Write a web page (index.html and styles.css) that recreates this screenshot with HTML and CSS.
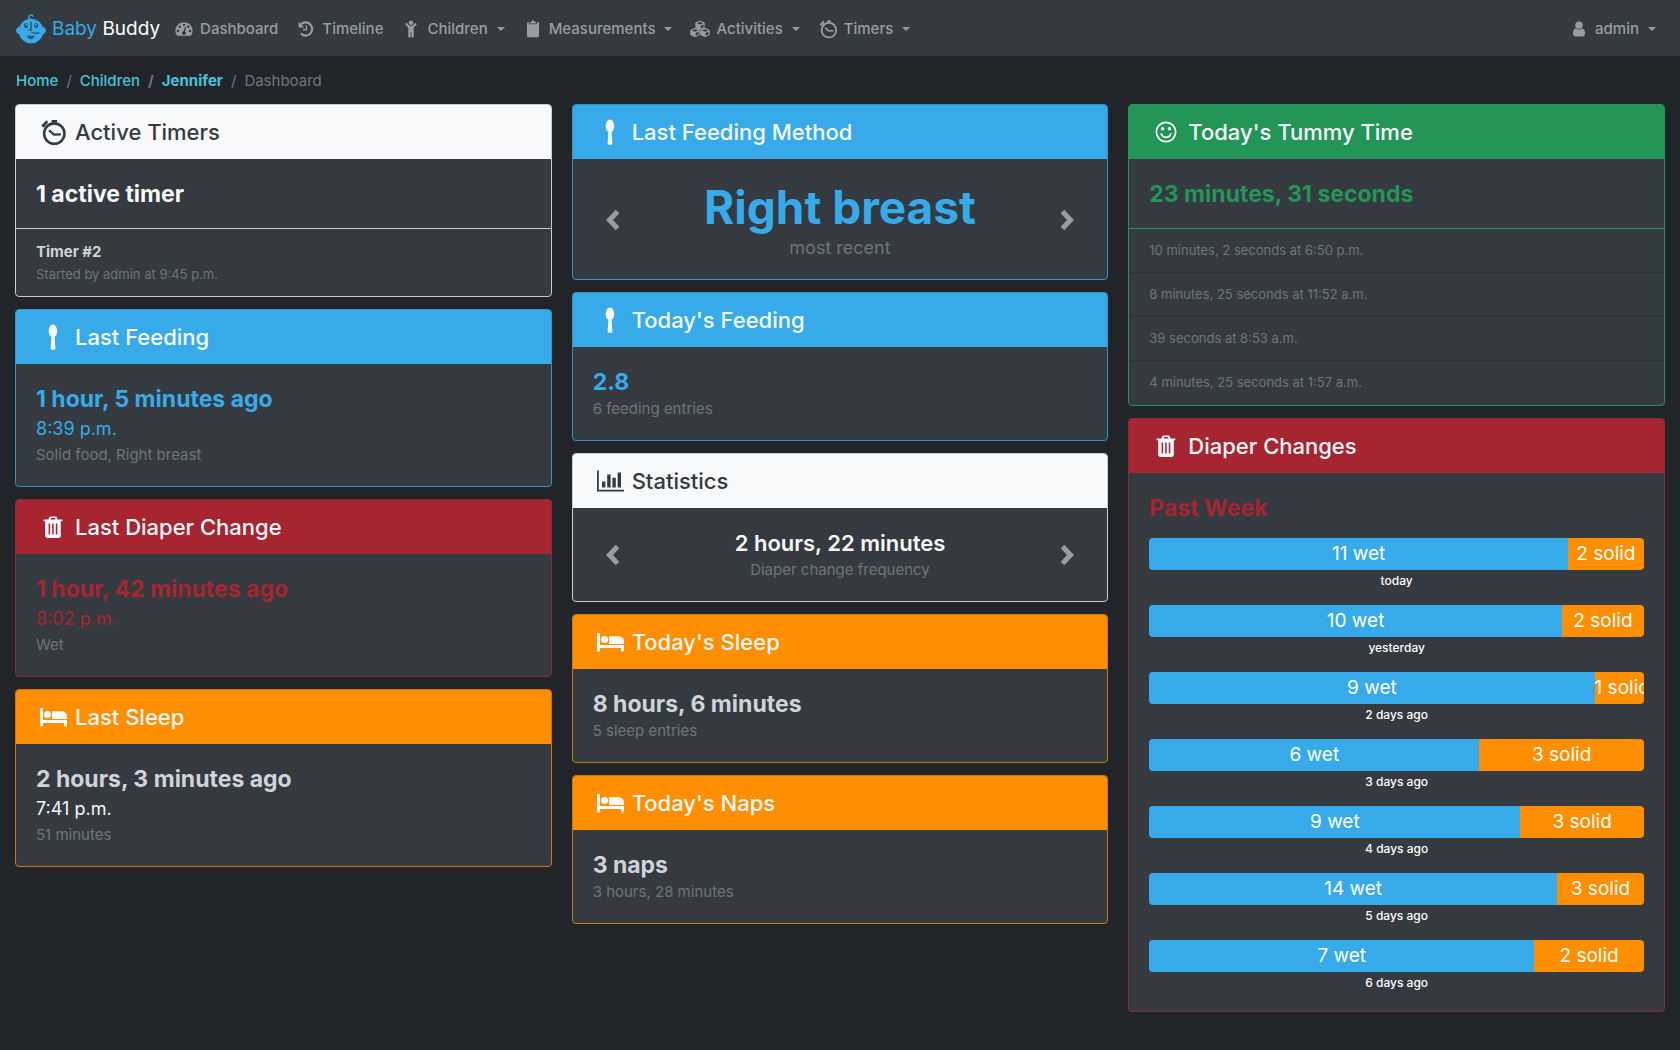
FILE: index.html
```html
<!DOCTYPE html>
<html lang="en">
<head>
<meta charset="utf-8">
<meta name="viewport" content="width=device-width, initial-scale=1">
<title>Baby Buddy</title>
<link rel="stylesheet" href="styles.css">
</head>
<body>
<svg class="sprite" aria-hidden="true">
  <symbol id="i-clock" viewBox="0 0 28 28">
    <circle cx="15.300" cy="15.600" r="10.200" fill="none" stroke="currentColor" stroke-width="2.600"/>
    <path d="M10.600 12.800L15 16.600L21 16.400" fill="none" stroke="currentColor" stroke-width="2.200" stroke-linecap="round"/>
    <path d="M12.600 2h5.400v2.600h-5.400zM2.200 7.600L7.600 2.200L9 3.800L8.400 5.800L6.400 7.600L5.600 9L4.400 9.400z" fill="currentColor"/>
  </symbol>
  <symbol id="i-spoon" viewBox="0 0 28 28">
    <path d="M14 1.600c2.600 0 4.300 3.500 4.300 7 0 2.700-1.100 4.400-2.700 5.200l.8 11.400c.1 1-.8 1.600-2.400 1.600s-2.500-.6-2.400-1.600l.8-11.400c-1.600-.8-2.700-2.500-2.700-5.200 0-3.500 1.700-7 4.300-7z" fill="currentColor"/>
  </symbol>
  <symbol id="i-trash" viewBox="0 0 28 28">
    <path fill="currentColor" fill-rule="evenodd" d="M4.600 6.400h4.800l.9-2.200c.2-.5.700-.8 1.200-.8h5c.5 0 1 .3 1.200.8l.9 2.200h4.800v1.900h-1.600v14.200c0 1.400-1 2.400-2.300 2.400h-11c-1.300 0-2.300-1-2.300-2.400V8.300H4.600zM11.500 6.400h5l-.6-1.300h-3.800zM9.600 10.600v10.800h1.500V10.600zM13.200 10.600v10.800h1.500V10.600zM16.800 10.600v10.800h1.500V10.600z"/>
  </symbol>
  <symbol id="i-bed" viewBox="0 0 28 28">
    <path fill="currentColor" d="M1 5h3v12h24v6.600h-3V20H4v3.600H1z"/>
    <circle cx="8.500" cy="11.500" r="3.600" fill="currentColor"/>
    <path fill="currentColor" d="M13 8.200h9.500c3.300 0 5.500 2.300 5.500 5.500v2.300H13z"/>
  </symbol>
  <symbol id="i-chart" viewBox="0 0 28 28">
    <path fill="currentColor" d="M1 3.500h1.800v19.200H28v1.800H1zM6 14.500h3.400v6H6zM11.200 7.500h3.400v13h-3.400zM16.400 10.800h3.400v9.700h-3.400zM21.600 5.500H25v15h-3.400z"/>
  </symbol>
  <symbol id="i-smile" viewBox="0 0 28 28">
    <circle cx="14" cy="14" r="9.600" fill="none" stroke="currentColor" stroke-width="1.800"/>
    <circle cx="10.600" cy="10.800" r="1.700" fill="currentColor"/>
    <circle cx="17.400" cy="10.800" r="1.700" fill="currentColor"/>
    <path d="M9.200 16c1 2.400 2.700 3.400 4.800 3.400s3.800-1 4.800-3.400" fill="none" stroke="currentColor" stroke-width="1.700" stroke-linecap="round"/>
  </symbol>
  <symbol id="i-gauge" viewBox="0 0 28 28">
    <path fill="currentColor" fill-rule="evenodd" d="M14 4.500c6.900 0 12 5.400 12 12 0 2.300-.6 4.500-1.800 6.400-.3.400-.7.600-1.200.6H5c-.5 0-.9-.2-1.200-.6C2.600 21 2 18.800 2 16.500c0-6.600 5.100-12 12-12zM5.500 15a1.700 1.700 0 1 0 0 3.400 1.700 1.700 0 0 0 0-3.400zM8.100 9a1.700 1.700 0 1 0 0 3.400 1.700 1.700 0 0 0 0-3.400zM14 6.500a1.700 1.700 0 1 0 0 3.400 1.700 1.700 0 0 0 0-3.400zM19.900 9a1.700 1.700 0 1 0 0 3.400 1.700 1.700 0 0 0 0-3.400zM22.500 15a1.700 1.700 0 1 0 0 3.400 1.700 1.700 0 0 0 0-3.400zM15.200 11.200L13.600 17a2.600 2.600 0 1 0 1.800.5l1.500-5.800z"/>
  </symbol>
  <symbol id="i-history" viewBox="0 0 28 28">
    <path d="M7 7.400A9.200 9.200 0 1 1 6.800 20.400" fill="none" stroke="currentColor" stroke-width="3"/>
    <path d="M3.600 4v8h8z" fill="currentColor"/>
    <path d="M14.600 9v6h-4.600" fill="none" stroke="currentColor" stroke-width="2"/>
  </symbol>
  <symbol id="i-child" viewBox="0 0 28 28">
    <circle cx="14" cy="5.200" r="3.200" fill="currentColor"/>
    <path fill="currentColor" d="M6.600 6.200c.6-.6 1.500-.6 2.100 0l3.300 3.300h4l3.300-3.300c.6-.6 1.500-.6 2.100 0s.6 1.500 0 2.100L17.800 12v12.600c0 .9-.7 1.600-1.600 1.600s-1.600-.7-1.600-1.600V19h-1.200v5.600c0 .9-.7 1.600-1.600 1.600s-1.600-.7-1.600-1.600V12L6.600 8.300c-.6-.6-.6-1.500 0-2.100z"/>
  </symbol>
  <symbol id="i-clipboard" viewBox="0 0 28 28">
    <path fill="currentColor" d="M5.600 6.500c0-1 .8-1.800 1.800-1.800H8.500v2.600h11V4.700h1.100c1 0 1.800.8 1.800 1.800v17.200c0 1-.8 1.800-1.800 1.800H7.400c-1 0-1.800-.8-1.800-1.800z"/>
    <path fill="currentColor" d="M9.700 6.200V4.600c1-.5 1.900-.6 2.500-1 .3-1.200.8-2 1.800-2s1.500.8 1.800 2c.6.400 1.500.5 2.500 1v1.600z"/>
  </symbol>
  <symbol id="i-cubes" viewBox="0 0 30 28">
    <g fill="currentColor" stroke="currentColor" stroke-width="1.400" stroke-linejoin="round">
      <path d="M15 2l6.300 2.800v7L15 14.600l-6.300-2.800v-7z"/>
      <path d="M7.500 13l6.300 2.800v7l-6.300 2.800-6.300-2.800v-7z"/>
      <path d="M22.500 13l6.300 2.800v7l-6.300 2.800-6.300-2.800v-7z"/>
    </g>
    <path class="cube-face" d="M15 3.200l4.600 2L15 7.200l-4.600-2zM7.500 14.200l4.600 2-4.600 2-4.600-2zM22.500 14.200l4.600 2-4.600 2-4.600-2zM16 9.100l4.200-1.900v4L16 13zM8.500 20.100l4.200-1.900v4L8.500 24zM23.500 20.100l4.200-1.900v4L23.500 24z"/>
  </symbol>
  <symbol id="i-user" viewBox="0 0 28 28">
    <circle cx="14" cy="8.600" r="5.200" fill="currentColor"/>
    <path fill="currentColor" d="M9.600 12.800c1.200 1.300 2.700 2 4.400 2s3.200-.7 4.400-2c2.700.6 4 3.600 4 7.200 0 2.700-1.300 4.500-3.400 4.500H9c-2.100 0-3.400-1.800-3.400-4.500 0-3.600 1.300-6.600 4-7.200z"/>
  </symbol>
  <symbol id="i-prev" viewBox="0 0 16 24">
    <path d="M12.500 3.500L4.500 12l8 8.500" fill="none" stroke="currentColor" stroke-width="5"/>
  </symbol>
  <symbol id="i-next" viewBox="0 0 16 24">
    <path d="M3.500 3.500l8 8.500-8 8.500" fill="none" stroke="currentColor" stroke-width="5"/>
  </symbol>
</svg>

<nav class="navbar">
  <a class="brand" href="#">
    <svg class="logo" viewBox="0 0 30 30" aria-hidden="true">
      <circle cx="15" cy="17" r="12.300" fill="#37abe9"/>
      <path d="M3.500 12.500C1.200 13 0 15 0 16.700s1.800 3.600 4 3.800zM26.500 12.500c2.300.5 3.500 2.500 3.500 4.200s-1.800 3.600-4 3.800z" fill="#37abe9"/>
      <path d="M17.300 2.700a2.300 2.300 0 1 0-1.200 2.600" fill="none" stroke="#37abe9" stroke-width="1.300"/>
      <g fill="none" stroke="#2b4d66" stroke-width="1.300" stroke-linecap="round">
        <path d="M15 8.200v7.600h-2"/>
        <path d="M15.600 18c2.200 1.400 4.800 1.600 7.200 1"/>
      </g>
      <ellipse cx="10" cy="11.500" rx="2" ry="2.600" fill="#2b4d66"/>
      <ellipse cx="20.200" cy="11.500" rx="2" ry="2.600" fill="#2b4d66"/>
      <circle cx="10.400" cy="11" r=".9" fill="#37abe9"/>
      <circle cx="19.800" cy="11" r=".9" fill="#37abe9"/>
      <path d="M11 21.200c2.400.8 5.200.8 7.600 0-.2 2.300-1.700 3.700-3.800 3.700S11.200 23.500 11 21.200z" fill="#2b4d66"/>
    </svg>
    <span><span class="brand-accent">Baby</span> Buddy</span>
  </a>
  <a class="nav-link" href="#"><svg class="icon"><use href="#i-gauge"/></svg>Dashboard</a>
  <a class="nav-link" href="#"><svg class="icon"><use href="#i-history"/></svg>Timeline</a>
  <button class="nav-link dropdown" type="button"><svg class="icon"><use href="#i-child"/></svg>Children</button>
  <button class="nav-link dropdown" type="button"><svg class="icon"><use href="#i-clipboard"/></svg>Measurements</button>
  <button class="nav-link dropdown" type="button"><svg class="icon"><use href="#i-cubes"/></svg>Activities</button>
  <button class="nav-link dropdown" type="button"><svg class="icon"><use href="#i-clock"/></svg>Timers</button>
  <button class="nav-link dropdown user" type="button"><svg class="icon"><use href="#i-user"/></svg>admin</button>
</nav>

<nav class="breadcrumb" aria-label="Breadcrumb">
  <a href="#">Home</a><span>/</span><a href="#">Children</a><b>/</b><a class="current-child" href="#">Jennifer</a><span>/</span><span>Dashboard</span>
</nav>

<main class="columns">
  <div class="column">
    <section class="card light">
      <h2 class="card-header"><svg class="icon"><use href="#i-clock"/></svg>Active Timers</h2>
      <div class="card-body"><h3 class="value">1 active timer</h3></div>
      <ul class="list">
        <li class="timer"><a href="#">Timer #2</a><p>Started by admin at 9:45 p.m.</p></li>
      </ul>
    </section>
    <section class="card blue">
      <h2 class="card-header"><svg class="icon"><use href="#i-spoon"/></svg>Last Feeding</h2>
      <div class="card-body">
        <h3 class="value">1 hour, 5 minutes ago</h3>
        <p class="time">8:39 p.m.</p>
        <p class="note">Solid food, Right breast</p>
      </div>
    </section>
    <section class="card red">
      <h2 class="card-header"><svg class="icon"><use href="#i-trash"/></svg>Last Diaper Change</h2>
      <div class="card-body">
        <h3 class="value">1 hour, 42 minutes ago</h3>
        <p class="time">8:02 p.m.</p>
        <p class="note">Wet</p>
      </div>
    </section>
    <section class="card orange">
      <h2 class="card-header"><svg class="icon"><use href="#i-bed"/></svg>Last Sleep</h2>
      <div class="card-body">
        <h3 class="value">2 hours, 3 minutes ago</h3>
        <p class="time">7:41 p.m.</p>
        <p class="note">51 minutes</p>
      </div>
    </section>
  </div>

  <div class="column">
    <section class="card blue">
      <h2 class="card-header"><svg class="icon"><use href="#i-spoon"/></svg>Last Feeding Method</h2>
      <div class="carousel">
        <button type="button" aria-label="Previous"><svg class="chevron"><use href="#i-prev"/></svg></button>
        <div class="slide">
          <h3 class="display">Right breast</h3>
          <p class="caption">most recent</p>
        </div>
        <button type="button" aria-label="Next"><svg class="chevron"><use href="#i-next"/></svg></button>
      </div>
    </section>
    <section class="card blue">
      <h2 class="card-header"><svg class="icon"><use href="#i-spoon"/></svg>Today's Feeding</h2>
      <div class="card-body">
        <h3 class="value">2.8</h3>
        <p class="note">6 feeding entries</p>
      </div>
    </section>
    <section class="card light">
      <h2 class="card-header"><svg class="icon"><use href="#i-chart"/></svg>Statistics</h2>
      <div class="carousel">
        <button type="button" aria-label="Previous"><svg class="chevron"><use href="#i-prev"/></svg></button>
        <div class="slide">
          <h3 class="value stat">2 hours, 22 minutes</h3>
          <p class="note">Diaper change frequency</p>
        </div>
        <button type="button" aria-label="Next"><svg class="chevron"><use href="#i-next"/></svg></button>
      </div>
    </section>
    <section class="card orange">
      <h2 class="card-header"><svg class="icon"><use href="#i-bed"/></svg>Today's Sleep</h2>
      <div class="card-body">
        <h3 class="value">8 hours, 6 minutes</h3>
        <p class="note">5 sleep entries</p>
      </div>
    </section>
    <section class="card orange">
      <h2 class="card-header"><svg class="icon"><use href="#i-bed"/></svg>Today's Naps</h2>
      <div class="card-body">
        <h3 class="value">3 naps</h3>
        <p class="note">3 hours, 28 minutes</p>
      </div>
    </section>
  </div>

  <div class="column">
    <section class="card green">
      <h2 class="card-header"><svg class="icon"><use href="#i-smile"/></svg>Today's Tummy Time</h2>
      <div class="card-body"><h3 class="value">23 minutes, 31 seconds</h3></div>
      <ul class="list">
        <li>10 minutes, 2 seconds at 6:50 p.m.</li>
        <li>8 minutes, 25 seconds at 11:52 a.m.</li>
        <li>39 seconds at 8:53 a.m.</li>
        <li>4 minutes, 25 seconds at 1:57 a.m.</li>
      </ul>
    </section>
    <section class="card red">
      <h2 class="card-header"><svg class="icon"><use href="#i-trash"/></svg>Diaper Changes</h2>
      <div class="card-body week">
        <h3 class="value">Past Week</h3>
        <div class="day"><div class="progress"><div class="wet" style="width:84.6%">11 wet</div><div class="solid" style="width:15.4%">2 solid</div></div><p>today</p></div>
        <div class="day"><div class="progress"><div class="wet" style="width:83.4%">10 wet</div><div class="solid" style="width:16.6%">2 solid</div></div><p>yesterday</p></div>
        <div class="day"><div class="progress"><div class="wet" style="width:90%">9 wet</div><div class="solid" style="width:10%">1 solid</div></div><p>2 days ago</p></div>
        <div class="day"><div class="progress"><div class="wet" style="width:66.7%">6 wet</div><div class="solid" style="width:33.3%">3 solid</div></div><p>3 days ago</p></div>
        <div class="day"><div class="progress"><div class="wet" style="width:75%">9 wet</div><div class="solid" style="width:25%">3 solid</div></div><p>4 days ago</p></div>
        <div class="day"><div class="progress"><div class="wet" style="width:82.4%">14 wet</div><div class="solid" style="width:17.6%">3 solid</div></div><p>5 days ago</p></div>
        <div class="day"><div class="progress"><div class="wet" style="width:77.8%">7 wet</div><div class="solid" style="width:22.2%">2 solid</div></div><p>6 days ago</p></div>
      </div>
    </section>
  </div>
</main>
</body>
</html>
```
FILE: styles.css
```css
* {
  box-sizing: border-box;
}

body {
  margin: 0;
  background: #212529;
  color: #fff;
  font: 400 15px/24px Inter, "Liberation Sans", sans-serif;
}

h2, h3, p, ul {
  margin: 0;
  padding: 0;
}

a {
  color: inherit;
  text-decoration: none;
}

button {
  border: 0;
  padding: 0;
  background: none;
  color: inherit;
  font: inherit;
}

.sprite {
  display: none;
}

.icon {
  flex: none;
  overflow: visible;
}

/* Top navigation */

.navbar {
  display: flex;
  align-items: center;
  gap: 2px;
  height: 56px;
  padding: 2px 16px 0;
  background: #343a40;
}

.brand {
  display: flex;
  align-items: center;
  gap: 6px;
  margin-right: 4px;
  font-size: 19px;
}

.brand-accent {
  color: #37abe9;
}

.logo {
  width: 30px;
  height: 30px;
}

.nav-link {
  display: flex;
  align-items: center;
  padding: 8px;
  color: #9a9da0;
  font-weight: 500;
}

.nav-link .icon {
  width: 20px;
  height: 20px;
  margin-right: 6px;
}

.cube-face {
  fill: #343a40;
}

.dropdown::after {
  content: "";
  margin-left: 9px;
  border: 4px solid transparent;
  border-top-color: currentColor;
  border-bottom: 0;
}

.user {
  margin-left: auto;
}

/* Breadcrumb */

.breadcrumb {
  display: flex;
  gap: 8px;
  padding: 13px 16px 11px;
  color: #6c757d;
}

.breadcrumb a {
  color: #45c4dc;
  font-weight: 500;
}

.breadcrumb .current-child {
  font-weight: 700;
}

/* Cards */

.columns {
  display: grid;
  grid-template-columns: repeat(3, 1fr);
  align-items: start;
  gap: 20px;
  padding: 0 15px 36px;
}

.column {
  display: grid;
  gap: 12px;
}

.card {
  --accent: #f8f9fa;
  --header-text: #f8f9fa;
  --value: var(--accent);
  --line: var(--accent);
  overflow: hidden;
  border: 1px solid var(--line);
  border-radius: 4px;
  background: #343a40;
}

.light {
  --header-text: #343a40;
  --line: #c9cbcd;
}

.blue {
  --accent: #37abe9;
  --line: #3492c5;
}

.red {
  --accent: #a72431;
  --line: #8b2835;
}

.orange {
  --accent: #ff8f00;
  --value: #ced4da;
  --line: #cc780c;
}

.green {
  --accent: #239556;
}

.card-header {
  display: flex;
  align-items: center;
  gap: 8px;
  height: 54px;
  padding: 0 23px;
  background: var(--accent);
  color: var(--header-text);
  font-size: 22px;
  font-weight: 500;
  line-height: 30px;
}

.card-header .icon {
  width: 28px;
  height: 28px;
}

.card-body {
  padding: 20px 20px 19px;
}

.value {
  color: var(--value);
  font-size: 23px;
  font-weight: 700;
  line-height: 30px;
}

.time {
  color: var(--value);
  font-size: 18px;
  line-height: 29px;
}

.orange .time {
  color: #f8f9fa;
}

.note {
  color: #6c757d;
  line-height: 24px;
}

.list {
  padding-bottom: 1px;
  list-style: none;
  border-top: 1px solid var(--line);
  color: #6c757d;
  font-size: 13px;
  line-height: 23px;
}

.list li {
  padding: 10px 20px;
}

.list .timer {
  padding-top: 12px;
  line-height: 22px;
}

.list li + li {
  border-top: 1px solid #2d3237;
}

.list a {
  color: #ced4da;
  font-size: 15px;
  font-weight: 700;
}

/* Carousels */

.carousel {
  display: flex;
  align-items: center;
  justify-content: space-between;
  padding: 20px 32px 19px;
}

.slide {
  text-align: center;
}

.chevron {
  display: block;
  width: 16px;
  height: 24px;
  color: #9a9c9f;
}

.display {
  color: var(--value);
  font-size: 46px;
  font-weight: 700;
  line-height: 57px;
}

.caption {
  color: #6c757d;
  font-size: 18px;
}

.stat {
  font-size: 22px;
  font-weight: 600;
}

/* Weekly bars */

.week {
  padding-bottom: 4px;
}

.week .value {
  margin-bottom: 15px;
}

.day {
  height: 67px;
}

.progress {
  display: flex;
  height: 32px;
  overflow: hidden;
  border-radius: 4px;
  font-size: 19px;
  line-height: 32px;
  text-align: center;
  white-space: nowrap;
}

.wet {
  background: #37abe9;
}

.solid {
  overflow: hidden;
  background: #ff8f00;
}

.day p {
  font-size: 12px;
  font-weight: 500;
  line-height: 22px;
  text-align: center;
}
```
